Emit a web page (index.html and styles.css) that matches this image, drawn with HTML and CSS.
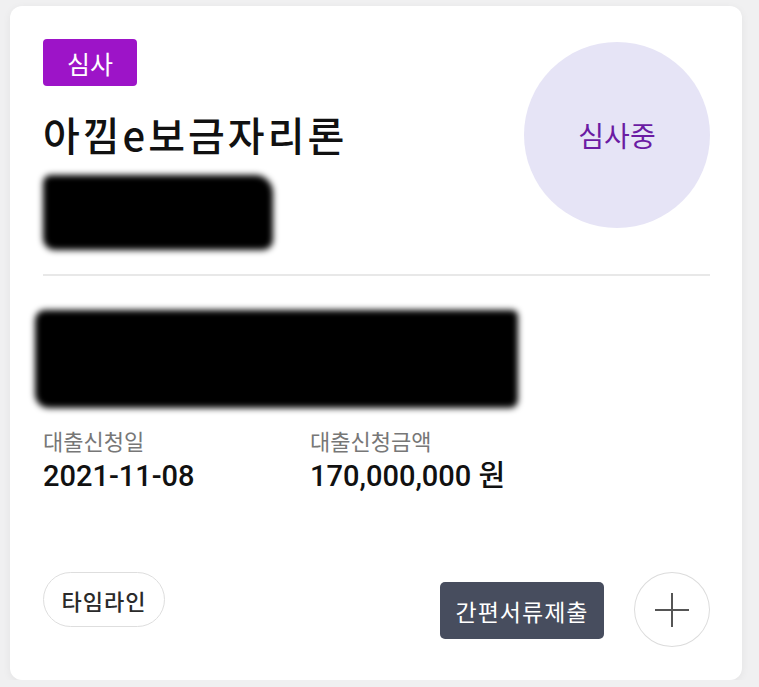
FILE: index.html
```html
<!DOCTYPE html>
<html lang="ko">
<head>
  <meta charset="UTF-8">
  <meta name="viewport" content="width=device-width, initial-scale=1.0">
  <title>대출 신청 현황</title>
  <link rel="stylesheet" href="styles.css">
</head>
<body>
  <div class="card">
    <div class="head">
      <div class="head-main">
        <span class="badge">심사</span>
        <h1 class="title">아낌e보금자리론</h1>
        <div class="redact redact-sm"></div>
      </div>
      <div class="status">심사중</div>
    </div>

    <hr class="divider">

    <div class="redact redact-lg"></div>

    <div class="facts">
      <div class="fact">
        <div class="fact-label">대출신청일</div>
        <div class="fact-value">2021-11-08</div>
      </div>
      <div class="fact">
        <div class="fact-label">대출신청금액</div>
        <div class="fact-value">170,000,000 원</div>
      </div>
    </div>

    <div class="actions">
      <a href="#" class="btn-outline">타임라인</a>
      <div class="actions-right">
        <a href="#" class="btn-dark">간편서류제출</a>
        <button class="btn-plus" aria-label="추가">
          <svg width="36" height="36" viewBox="0 0 36 36">
            <path d="M18 1v34M1 18h34" stroke="#555" stroke-width="2" fill="none"/>
          </svg>
        </button>
      </div>
    </div>
  </div>
</body>
</html>
```

FILE: styles.css
```css
body {
  margin: 0;
  background: #f0f0f1;
  font-family: Roboto, "Noto Sans CJK KR", sans-serif;
  color: #111;
}
.card {
  margin: 6px 0 0 10px;
  width: 732px;
  height: 674px;
  box-sizing: border-box;
  padding: 33px 32px 0 33px;
  background: #fff;
  border-radius: 12px;
  box-shadow: 0 2px 8px rgba(0, 0, 0, 0.06);
}
.head {
  display: flex;
  justify-content: space-between;
}
.head-main {
  display: flex;
  flex-direction: column;
  align-items: flex-start;
}
.badge {
  display: inline-flex;
  align-items: center;
  justify-content: center;
  width: 94px;
  height: 47px;
  background: #9d14c8;
  color: #fff;
  font-family: "Noto Sans CJK KR", sans-serif;
  font-size: 25px;
  border-radius: 4px;
}
.title {
  margin: 24px 0 0;
  font-family: "Noto Sans CJK KR", sans-serif;
  font-size: 40px;
  font-weight: 500;
  letter-spacing: 3px;
  line-height: 48px;
  color: #111;
}
.redact {
  background: #000;
  filter: blur(3px);
}
.redact-sm {
  margin-top: 17px;
  width: 230px;
  height: 75px;
  border-radius: 8px 18px 10px 12px;
}
.status {
  margin-top: 3px;
  width: 186px;
  height: 186px;
  border-radius: 50%;
  background: #e6e4f6;
  color: #6b1ba3;
  font-family: "Noto Sans CJK KR", sans-serif;
  font-size: 28px;
  display: flex;
  align-items: center;
  justify-content: center;
}
.divider {
  margin: 24px 0 0;
  border: 0;
  border-top: 2px solid #e8e8e8;
}
.redact-lg {
  margin: 34px 0 0 -8px;
  width: 483px;
  height: 98px;
  border-radius: 10px 6px 8px 14px;
}
.facts {
  display: flex;
  margin-top: 17px;
}
.fact {
  width: 267px;
}
.fact-label {
  font-family: "Noto Sans CJK KR", sans-serif;
  font-size: 22px;
  color: #777;
  line-height: 30px;
}
.fact-value {
  margin-top: 4px;
  font-size: 29px;
  font-weight: 500;
  line-height: 34px;
  color: #111;
}
.actions {
  margin-top: 79px;
  display: flex;
  justify-content: space-between;
  align-items: flex-start;
}
.actions-right {
  display: flex;
  align-items: flex-start;
  gap: 30px;
}
.btn-outline {
  display: inline-flex;
  align-items: center;
  justify-content: center;
  width: 122px;
  height: 55px;
  box-sizing: border-box;
  border: 1.5px solid #dedede;
  border-radius: 28px;
  color: #2a2a2a;
  font-family: "Noto Sans CJK KR", sans-serif;
  font-size: 22px;
  font-weight: 500;
  letter-spacing: 1px;
  text-decoration: none;
}
.btn-dark {
  margin-top: 10px;
  display: inline-flex;
  align-items: center;
  justify-content: center;
  width: 164px;
  height: 57px;
  background: #474d5e;
  color: #fff;
  border-radius: 5px;
  font-family: "Noto Sans CJK KR", sans-serif;
  font-size: 23px;
  letter-spacing: 1px;
  text-decoration: none;
}
.btn-plus {
  width: 76px;
  height: 75px;
  border: 1.5px solid #dcdcdc;
  border-radius: 50%;
  background: #fff;
  padding: 0;
  display: flex;
  align-items: center;
  justify-content: center;
}
```
